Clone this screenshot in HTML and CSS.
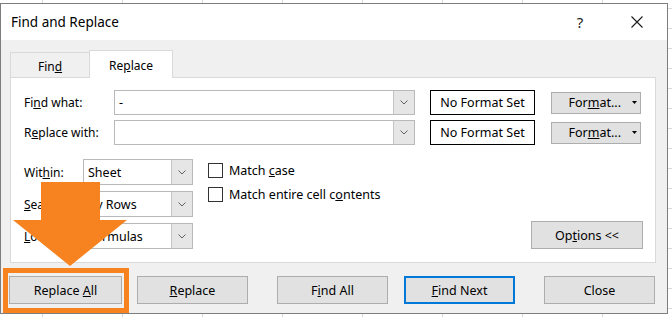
FILE: index.html
```html
<!DOCTYPE html>
<html lang="en">
<head>
    <meta charset="UTF-8">
    <title>Find and Replace</title>
    <link rel="stylesheet" href="styles.css">
</head>
<body>

<div class="dialog">
    <div class="titlebar">
        <span class="title">Find and Replace</span>
        <span class="help">?</span>
        <span class="close">
            <svg width="12" height="12" viewBox="0 0 12 12"><path d="M0.5 0.5 L11.5 11.5 M11.5 0.5 L0.5 11.5" stroke="#1a1a1a" stroke-width="1.1" fill="none"/></svg>
        </span>
    </div>

    <div class="content">
        <div class="tabs">
            <div class="tab"><span>Fin<u>d</u></span></div>
            <div class="tab active"><span>Re<u>p</u>lace</span></div>
        </div>

        <div class="panel">
            <div class="field-row">
                <span class="label">Fi<u>n</u>d what:</span>
                <div class="combo wide">
                    <span class="combo-text">-</span>
                    <span class="drop"><svg width="8" height="5" viewBox="0 0 8 5"><polyline points="0.5,0.5 4,4 7.5,0.5" stroke="#606060" fill="none"/></svg></span>
                </div>
                <div class="format-box">No Format Set</div>
                <button class="btn format"><span>For<u>m</u>at...</span><svg class="caret" width="5" height="3" viewBox="0 0 5 3"><polygon points="0,0 5,0 2.5,3" fill="#000"/></svg></button>
            </div>
            <div class="field-row">
                <span class="label">R<u>e</u>place with:</span>
                <div class="combo wide">
                    <span class="combo-text"></span>
                    <span class="drop"><svg width="8" height="5" viewBox="0 0 8 5"><polyline points="0.5,0.5 4,4 7.5,0.5" stroke="#606060" fill="none"/></svg></span>
                </div>
                <div class="format-box">No Format Set</div>
                <button class="btn format"><span>For<u>m</u>at...</span><svg class="caret" width="5" height="3" viewBox="0 0 5 3"><polygon points="0,0 5,0 2.5,3" fill="#000"/></svg></button>
            </div>

            <div class="options">
                <div class="selects">
                    <div class="select-row">
                        <span class="label short">Wit<u>h</u>in:</span>
                        <div class="combo narrow">
                            <span class="combo-text">Sheet</span>
                            <span class="drop"><svg width="8" height="5" viewBox="0 0 8 5"><polyline points="0.5,0.5 4,4 7.5,0.5" stroke="#606060" fill="none"/></svg></span>
                        </div>
                    </div>
                    <div class="select-row">
                        <span class="label short"><u>S</u>earch:</span>
                        <div class="combo narrow">
                            <span class="combo-text">By Rows</span>
                            <span class="drop"><svg width="8" height="5" viewBox="0 0 8 5"><polyline points="0.5,0.5 4,4 7.5,0.5" stroke="#606060" fill="none"/></svg></span>
                        </div>
                    </div>
                    <div class="select-row">
                        <span class="label short"><u>L</u>ook in:</span>
                        <div class="combo narrow">
                            <span class="combo-text">Formulas</span>
                            <span class="drop"><svg width="8" height="5" viewBox="0 0 8 5"><polyline points="0.5,0.5 4,4 7.5,0.5" stroke="#606060" fill="none"/></svg></span>
                        </div>
                    </div>
                </div>

                <div class="checks">
                    <label class="check"><span class="box"></span><span>Match <u>c</u>ase</span></label>
                    <label class="check"><span class="box"></span><span>Match entire cell c<u>o</u>ntents</span></label>
                </div>

                <button class="btn options-btn">Op<u>t</u>ions &lt;&lt;</button>
            </div>
        </div>

        <div class="actions">
            <button class="btn action first">Replace <u>A</u>ll</button>
            <button class="btn action near"><u>R</u>eplace</button>
            <button class="btn action far">F<u>i</u>nd All</button>
            <button class="btn action near default"><u>F</u>ind Next</button>
            <button class="btn action far">Close</button>
        </div>
    </div>

    <!-- annotation drawn over the dialog -->
    <div class="highlight"></div>
    <svg class="arrow" width="114" height="84" viewBox="0 0 114 84">
        <polygon points="28,0 87,0 87,38 114,38 57,84 0,38 28,38" fill="#f6831f"/>
    </svg>
</div>

</body>
</html>
```

FILE: styles.css
```css
body {
    margin: 0;
    height: 317px;
    overflow: hidden;
    font-family: "Noto Sans", sans-serif;
    font-size: 12px;
    color: #000;
    background-color: #fff;
    background-image:
        linear-gradient(to right, #d9d9d9 1px, transparent 1px),
        linear-gradient(to bottom, #d9d9d9 1px, transparent 1px);
    background-size: 80px 20px;
    background-position: 42px 8px;
}
.dialog {
    position: relative;
    margin-top: 3px;
    width: 668px;
    height: 311px;
    box-sizing: border-box;
    border: 1px solid #7d7d7d;
    background: #f0f0f0;
    overflow: hidden;
}
.titlebar {
    display: flex;
    align-items: center;
    height: 36px;
    background: #fff;
}
.title {
    flex: 1;
    padding-left: 10px;
    font-size: 13.5px;
}
.help {
    width: 20px;
    text-align: center;
    font-size: 15px;
    color: #222;
}
.close {
    display: flex;
    justify-content: center;
    width: 20px;
    margin-left: 37px;
    margin-right: 20px;
}
.content {
    padding: 10px 11px 9px 9px;
}
.tabs {
    display: flex;
    align-items: flex-end;
    height: 27px;
}
.tab {
    display: flex;
    align-items: center;
    justify-content: center;
    box-sizing: border-box;
    height: 25px;
    width: 79px;
    padding-top: 2px;
    border: 1px solid #d9d9d9;
    border-bottom: none;
    border-right: none;
}
.tab.active {
    position: relative;
    height: 28px;
    width: 84px;
    margin-bottom: -1px;
    background: #fff;
    border-right: 1px solid #d9d9d9;
    z-index: 1;
}
.panel {
    box-sizing: border-box;
    height: 186px;
    background: #fff;
    border: 1px solid #d9d9d9;
    padding: 12px 12px 0 13px;
}
.field-row {
    display: flex;
    align-items: center;
    height: 25px;
    margin-bottom: 5px;
}
.label {
    width: 90px;
}
.label.short {
    width: 59px;
}
.combo {
    display: flex;
    box-sizing: border-box;
    height: 25px;
    border: 1px solid #b9b9b9;
    background: #fff;
}
.combo.wide {
    width: 301px;
}
.combo.narrow {
    width: 110px;
    height: 26px;
}
.combo-text {
    flex: 1;
    display: flex;
    align-items: center;
    padding-left: 4px;
    font-size: 12.5px;
}
.drop {
    display: flex;
    align-items: center;
    justify-content: center;
    width: 20px;
    background: #e6e6e6;
    border-left: 1px solid #c4c4c4;
}
.format-box {
    display: flex;
    align-items: center;
    justify-content: center;
    box-sizing: border-box;
    width: 105px;
    height: 25px;
    margin-left: 15px;
    border: 1px solid #000;
    font-size: 12.5px;
}
.btn {
    box-sizing: border-box;
    font-family: "Noto Sans", sans-serif;
    font-size: 12.5px;
    color: #000;
    background: #e1e1e1;
    border: 1px solid #adadad;
    padding: 0;
}
.format {
    display: flex;
    align-items: center;
    justify-content: flex-end;
    width: 90px;
    height: 22px;
    margin-left: 16px;
    padding-right: 3px;
}
.caret {
    margin-left: 11px;
}
.options {
    display: flex;
    margin-top: 14px;
}
.selects {
    display: flex;
    flex-direction: column;
    gap: 6px;
}
.select-row {
    display: flex;
    align-items: center;
}
.checks {
    flex: 1;
    display: flex;
    flex-direction: column;
    gap: 9px;
    padding-top: 4px;
    margin-left: 15px;
}
.check {
    display: flex;
    align-items: center;
    height: 15px;
    font-size: 12.5px;
}
.box {
    box-sizing: border-box;
    width: 15px;
    height: 15px;
    margin-right: 6px;
    border: 1px solid #333;
    background: #fff;
}
.options-btn {
    align-self: flex-end;
    width: 112px;
    height: 28px;
}
.actions {
    display: flex;
    margin-top: 13px;
}
.action {
    width: 111px;
    height: 28px;
}
.action.first {
    width: 113px;
    margin-left: -1px;
}
.action.near {
    margin-left: 15px;
}
.action.far {
    margin-left: 29px;
}
.action.default {
    margin-left: 16px;
    border: 2px solid #0078d7;
}
.highlight {
    position: absolute;
    left: 2px;
    top: 264px;
    width: 126px;
    height: 45px;
    box-sizing: border-box;
    border: 5px solid #f6831f;
}
.arrow {
    position: absolute;
    left: 12px;
    top: 178px;
}
```
